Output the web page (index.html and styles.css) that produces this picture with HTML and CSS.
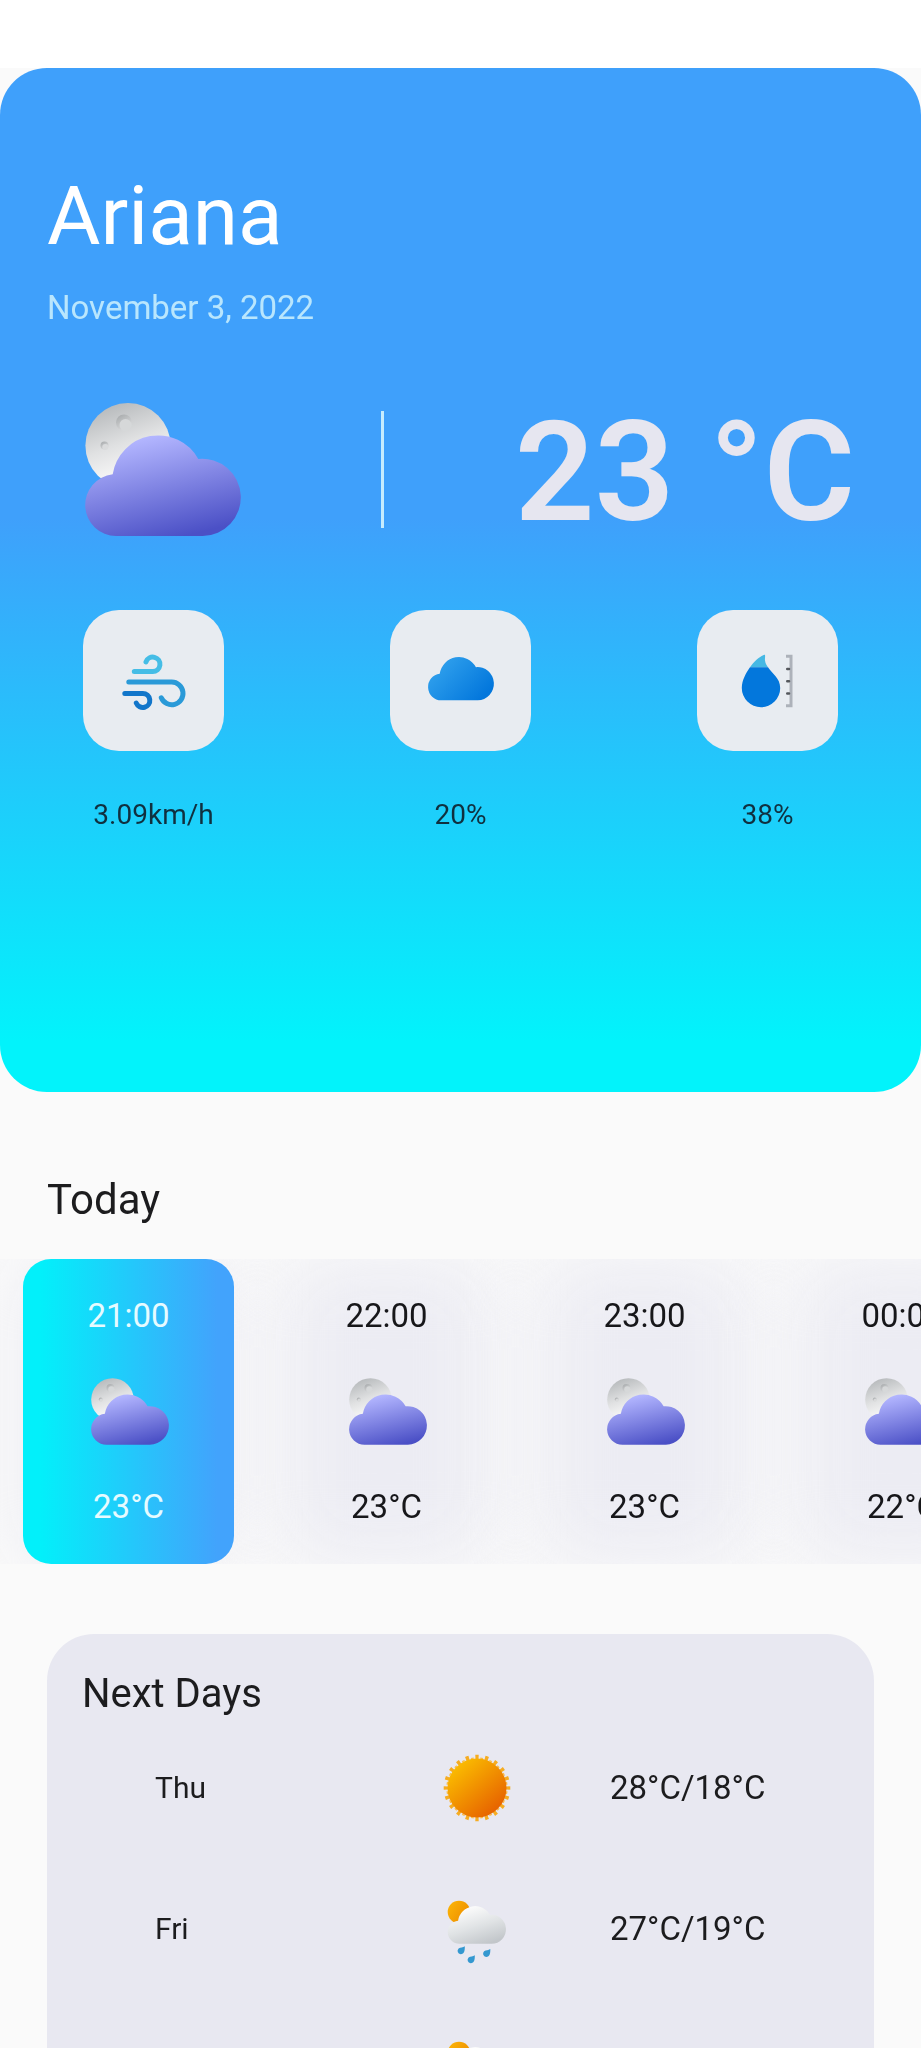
FILE: index.html
```html
<!DOCTYPE html>
<html lang="en">
<head>
<meta charset="utf-8">
<meta name="viewport" content="width=device-width, initial-scale=1">
<title>Ariana weather</title>
<link rel="stylesheet" href="styles.css">
</head>
<body>
<svg class="sprite" width="0" height="0" aria-hidden="true">
  <defs>
    <linearGradient id="night" gradientUnits="userSpaceOnUse" x1="62" y1="34" x2="86" y2="136">
      <stop offset="0" stop-color="#b3b6ff"/><stop offset="1" stop-color="#4b50c6"/>
    </linearGradient>
    <linearGradient id="moon" gradientUnits="userSpaceOnUse" x1="24" y1="4" x2="48" y2="70">
      <stop offset="0" stop-color="#b9bcbe"/><stop offset=".55" stop-color="#e0e1e2"/><stop offset="1" stop-color="#f8f8f8"/>
    </linearGradient>
    <linearGradient id="blue" gradientUnits="userSpaceOnUse" x1="30" y1="50" x2="120" y2="135">
      <stop offset="0" stop-color="#2d9eec"/><stop offset="1" stop-color="#0377dc"/>
    </linearGradient>
    <linearGradient id="pale" gradientUnits="userSpaceOnUse" x1="64" y1="34" x2="96" y2="136">
      <stop offset="0" stop-color="#fbfbfb"/><stop offset=".5" stop-color="#e0e3e5"/><stop offset="1" stop-color="#c2c6ca"/>
    </linearGradient>
    <linearGradient id="crater" x1="0" y1="0" x2=".6" y2="1">
      <stop offset="0" stop-color="#a3a6a8"/><stop offset="1" stop-color="#dcddde"/>
    </linearGradient>
    <linearGradient id="sunny" x1=".15" y1=".1" x2=".85" y2=".9">
      <stop offset="0" stop-color="#fbbd00"/><stop offset="1" stop-color="#e66000"/>
    </linearGradient>
    <linearGradient id="sunny-small" x1=".1" y1=".2" x2="1" y2=".8">
      <stop offset="0" stop-color="#fab006"/><stop offset="1" stop-color="#ec8a00"/>
    </linearGradient>
    <path id="cloud" d="M31 133A31 31 0 0 1 27.7 71.2A46 46 0 0 1 113.3 56A38.600 38.600 0 1 1 117.7 133Z"/>
    <path id="drop" d="M3.8-4C3.9 0 3.5 4-.4 4A3.4 3.4 0 0 1-2.4-1.8C-.5-3 2-2.6 3.8-4Z"/>
    <symbol id="moon-cloud" viewBox="-6 0 162 133">
      <circle cx="43" cy="42.6" r="42.6" fill="url(#moon)"/>
      <circle cx="39" cy="19.500" r="8" fill="url(#crater)"/>
      <circle cx="40.500" cy="22" r="6" fill="#d6d8d9"/>
      <circle cx="19.500" cy="42.500" r="4" fill="url(#crater)"/>
      <circle cx="20.300" cy="44" r="3" fill="#dadbdc"/>
      <use href="#cloud" fill="url(#night)"/>
    </symbol>
    <symbol id="sun-rain" viewBox="0 0 70 70">
      <circle cx="17" cy="18" r="11.3" fill="url(#sunny-small)"/>
      <use href="#cloud" fill="url(#pale)" transform="translate(5.7 0) scale(.374)"/>
      <g fill="#3498d0">
        <use href="#drop" x="19" y="56.3"/><use href="#drop" x="29" y="65.3"/><use href="#drop" x="44.5" y="59"/>
      </g>
    </symbol>
  </defs>
</svg>

<main class="app">
  <header class="top">
    <section class="hero">
      <h1 class="city">Ariana</h1>
      <p class="date">November 3, 2022</p>
      <div class="now">
        <svg class="now-icon" role="img" aria-label="Partly cloudy night"><use href="#moon-cloud"/></svg>
        <span class="divider"></span>
        <p class="now-temp">23 °C</p>
      </div>
      <ul class="stats">
        <li class="stat">
          <span class="tile">
            <svg class="icon" viewBox="0 0 70 70" role="img" aria-label="Wind">
              <g transform="translate(3.3 8.8)" fill="none" stroke-width="5" stroke-linecap="round">
                <path stroke="#45bde6" d="M12 16.7H30.3A7.2 7.2 0 1 0 23.7 7"/>
                <path stroke="#2a9ad8" d="M6.5 27.3H49.3A11.3 11.3 0 1 1 39 43"/>
                <path stroke="#1276ca" d="M2.5 38.7H20.5A7 7 0 1 1 14 48.3"/>
              </g>
            </svg>
          </span>
          <span class="stat-value">3.09km/h</span>
        </li>
        <li class="stat">
          <span class="tile">
            <svg class="icon" viewBox="0 0 70 70" role="img" aria-label="Clouds">
              <use href="#cloud" fill="url(#blue)" transform="translate(2 -3) scale(.423 .431)"/>
            </svg>
          </span>
          <span class="stat-value">20%</span>
        </li>
        <li class="stat">
          <span class="tile">
            <svg class="icon" viewBox="0 0 70 70" role="img" aria-label="Humidity">
              <path fill="#45b8e4" d="M31.3 8.8C32.9 8.8 31.6 12 32 14.5C32.4 17.500 34 20 35 21.300H17C21 15.500 26 10.500 31.300 8.800Z"/>
              <path fill="#0377dc" d="M17 21.300H35C39 27.500 47.200 32 47.200 42A19.200 19.200 0 0 1 8.800 42C8.800 34.500 13 27 17 21.300Z"/>
              <path fill="none" stroke="#adb2ba" stroke-width="3" d="M53 10.300H58V59.800H53"/>
              <path stroke="#54575c" stroke-width="2.600" stroke-linecap="round" d="M54.300 23H56M54.300 35.200H56M54.300 47.500H56"/>
            </svg>
          </span>
          <span class="stat-value">38%</span>
        </li>
      </ul>
    </section>
  </header>

  <section class="today">
    <h2 class="today-title">Today</h2>
    <ul class="hours">
      <li class="hour hour-active">
        <span>21:00</span>
        <svg class="hour-icon" role="img" aria-label="Partly cloudy night"><use href="#moon-cloud"/></svg>
        <span>23°C</span>
      </li>
      <li class="hour">
        <span>22:00</span>
        <svg class="hour-icon" role="img" aria-label="Partly cloudy night"><use href="#moon-cloud"/></svg>
        <span>23°C</span>
      </li>
      <li class="hour">
        <span>23:00</span>
        <svg class="hour-icon" role="img" aria-label="Partly cloudy night"><use href="#moon-cloud"/></svg>
        <span>23°C</span>
      </li>
      <li class="hour">
        <span>00:00</span>
        <svg class="hour-icon" role="img" aria-label="Partly cloudy night"><use href="#moon-cloud"/></svg>
        <span>22°C</span>
      </li>
    </ul>
  </section>

  <section class="days">
    <h2 class="days-title">Next Days</h2>
    <table class="days-table">
      <tr>
        <th class="day" scope="row">Thu</th>
        <td class="sky">
          <svg class="icon" viewBox="0 0 70 70" role="img" aria-label="Sunny">
            <circle cx="35" cy="35" r="31" fill="none" stroke="#f5ac22" stroke-width="4.600" pathLength="20" stroke-dasharray=".34 .66" stroke-dashoffset=".17"/>
            <circle cx="35" cy="35" r="30" fill="none" stroke="#f9bd4c" stroke-width="1.400" pathLength="20" stroke-dasharray=".3 .7" stroke-dashoffset="-.350"/>
            <circle cx="35" cy="35" r="29.500" fill="url(#sunny)"/>
          </svg>
        </td>
        <td class="range">28°C/18°C</td>
      </tr>
      <tr>
        <th class="day" scope="row">Fri</th>
        <td class="sky"><svg class="icon" role="img" aria-label="Light rain"><use href="#sun-rain"/></svg></td>
        <td class="range">27°C/19°C</td>
      </tr>
      <tr>
        <th class="day" scope="row"></th>
        <td class="sky"><svg class="icon" role="img" aria-label="Light rain"><use href="#sun-rain"/></svg></td>
        <td class="range"></td>
      </tr>
    </table>
  </section>
</main>
</body>
</html>
```

FILE: styles.css
```css
* {
  box-sizing: border-box;
  margin: 0;
  padding: 0;
}

body {
  background: #fafafa;
  color: #1c1c1e;
  font-family: Roboto, "Liberation Sans", sans-serif;
}

h1, h2, th {
  font-weight: 400;
}

ul {
  list-style: none;
}

svg {
  display: block;
}

.sprite {
  position: absolute;
}

.app {
  height: 100vh;
  overflow-x: hidden;
  overflow-y: auto;
  scrollbar-width: none;
}

/* Current conditions */

.top {
  padding-top: 68px;
  background: linear-gradient(#fff 68px, #fafafa 68px);
}

.hero {
  min-height: 50vh;
  padding-top: 100px;
  border-radius: 47px;
  background: linear-gradient(#3fa0fb 44%, #02f3fb 95%);
}

.city {
  padding: 0 47px;
  color: #fff;
  font-size: 82px;
  line-height: 96px;
}

.date {
  margin-top: 25px;
  padding: 0 47px;
  color: #b9e6fd;
  font-size: 33px;
  line-height: 38px;
}

.now {
  display: flex;
  align-items: center;
  justify-content: space-between;
  margin-top: 57px;
  padding: 0 66px 0 70px;
}

.now-icon {
  width: 180px;
  height: 133px;
}

.divider {
  width: 3px;
  height: 117px;
  background: #c6ecfd;
}

.now-temp {
  padding-top: 6px;
  color: #e6e6f0;
  font-size: 140px;
  font-weight: 600;
  line-height: 164px;
}

.stats {
  display: grid;
  grid-template-columns: repeat(3, 1fr);
  margin-top: 56px;
}

.stat {
  display: flex;
  flex-direction: column;
  align-items: center;
  gap: 47px;
}

.tile {
  display: grid;
  place-items: center;
  width: 141px;
  height: 141px;
  border-radius: 36px;
  background: #e8ecf1;
}

.icon {
  width: 70px;
  height: 70px;
}

.stat-value {
  color: #10303f;
  font-size: 28px;
  line-height: 33px;
}

/* Hourly strip */

.today {
  padding-top: 83px;
}

.today-title {
  padding: 0 47px;
  font-size: 42px;
  line-height: 49px;
}

.hours {
  display: flex;
  gap: 47px;
  margin-top: 35px;
  padding: 0 23px;
  overflow: hidden;
}

.hour {
  position: relative;
  display: flex;
  flex: none;
  flex-direction: column;
  align-items: center;
  justify-content: space-between;
  width: 211px;
  height: 305px;
  padding: 38px 0;
  border-radius: 28px;
  color: #17171a;
  font-size: 33px;
  line-height: 38px;
}

/* Soft glow behind each hour, cut off by the strip */
.hour::before {
  content: "";
  position: absolute;
  z-index: -1;
  inset: 0;
  border-radius: 28px;
  background: #ececf3;
  filter: blur(38px);
}

.hour-active {
  color: #e6fbff;
  background: linear-gradient(90deg, #02f0fa 8%, #42a3fc 92%);
}

.hour-icon {
  width: 81px;
  height: 67px;
}

/* Daily forecast */

.days {
  margin: 70px 47px 0;
  padding-top: 36px;
  border-radius: 47px;
  background: #e8e8f1;
}

.days-title {
  padding: 0 35px;
  font-size: 40px;
  line-height: 47px;
}

.days-table {
  width: 100%;
  border-collapse: collapse;
}

.days-table tr {
  height: 141px;
}

.day {
  width: 296px;
  padding-left: 108px;
  font-size: 30px;
  text-align: left;
}

.sky .icon {
  margin: 0 auto;
}

.range {
  width: 264px;
  padding-right: 108px;
  font-size: 33px;
  white-space: nowrap;
}
```
